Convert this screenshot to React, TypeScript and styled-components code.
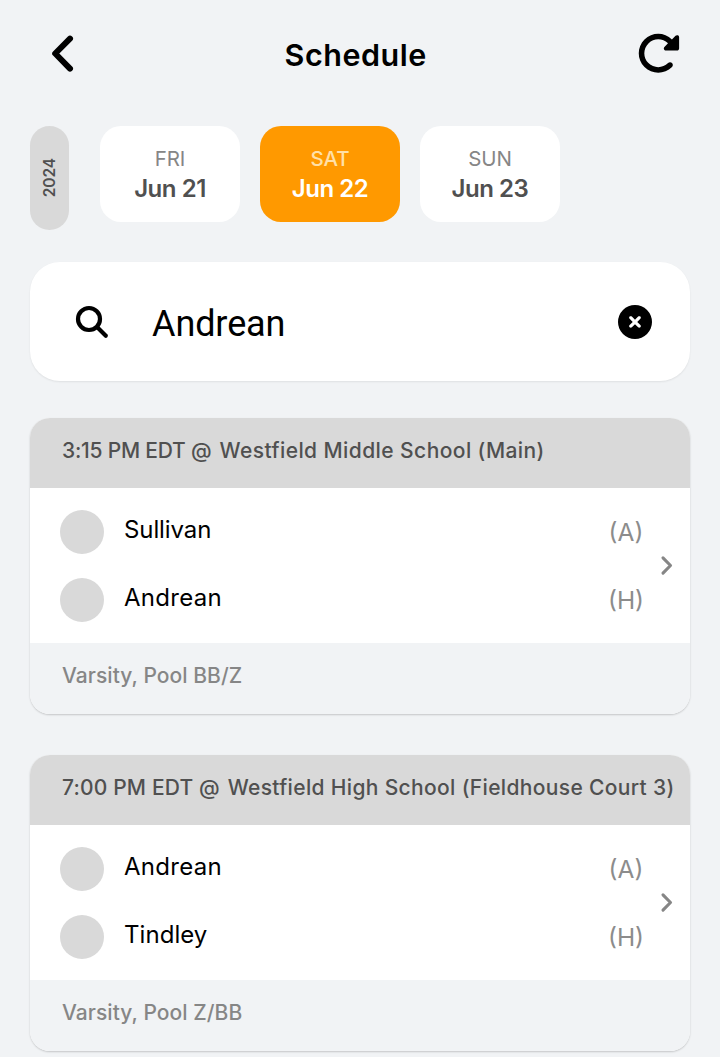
import React from 'react';
import styled, { createGlobalStyle } from 'styled-components';
import { FaCircleXmark, FaRotateRight } from 'react-icons/fa6';

const GlobalStyle = createGlobalStyle`
  * { box-sizing: border-box; }
  body { margin: 0; background: #f1f3f5; font-family: Inter, 'Liberation Sans', sans-serif; }
  button { border: 0; padding: 0; background: none; font: inherit; color: inherit; display: flex; }
`;

const Screen = styled.main`
  width: 720px;
  height: 1057px;
  overflow: hidden;
  padding: 0 30px;
  background: #f1f3f5;
`;

const TopBar = styled.header`
  height: 126px;
  padding: 31px 10px 0 20px;
  display: flex;
  align-items: flex-start;
`;

const Title = styled.h1`
  flex: 1;
  margin: 0;
  text-align: center;
  font-size: 30.5px;
  font-weight: 600;
  line-height: 48px;
  letter-spacing: 0.55px;
  color: #000;
`;

const DateRow = styled.section`
  height: 136px;
  display: flex;
  align-items: flex-start;
`;

const YearPill = styled.div`
  width: 39px;
  height: 104px;
  margin-right: 31px;
  border-radius: 20px;
  background: #d9d9d9;
  display: flex;
  align-items: center;
  justify-content: center;
`;

const Year = styled.span`
  writing-mode: vertical-rl;
  transform: rotate(180deg);
  font-size: 15.5px;
  font-weight: 600;
  line-height: 20px;
  letter-spacing: -0.1px;
  color: #505050;
`;

const DayCard = styled.button<{ $active?: boolean }>`
  && {
    width: 140px;
    height: 96px;
    margin-right: 20px;
    padding-top: 18px;
    border-radius: 21px;
    flex-direction: column;
    align-items: center;
    background: ${p => (p.$active ? '#ff9900' : '#fff')};
    color: ${p => (p.$active ? '#fff' : '#505050')};
  }
`;

const Weekday = styled.span<{ $active?: boolean }>`
  font-size: 20.5px;
  font-weight: ${p => (p.$active ? 500 : 400)};
  line-height: 29px;
  letter-spacing: -0.1px;
  color: ${p => (p.$active ? '#ffe0a8' : '#868686')};
`;

const DayDate = styled.span`
  font-size: 24px;
  font-weight: 600;
  line-height: 31px;
  letter-spacing: -0.45px;
`;

const SearchBox = styled.div`
  height: 119px;
  margin-bottom: 37px;
  padding: 0 38px 0 44px;
  border-radius: 30px;
  background: #fff;
  box-shadow: 0 1px 2px rgba(0, 0, 0, 0.08);
  display: flex;
  align-items: center;
`;

const Query = styled.span`
  flex: 1;
  margin-left: 42px;
  padding-top: 4px;
  font-family: Roboto, sans-serif;
  font-size: 36px;
  line-height: 44px;
  letter-spacing: -0.1px;
  color: #000;
`;

const GameCard = styled.article`
  height: 296px;
  margin-bottom: 41px;
  border-radius: 20px;
  overflow: hidden;
  background: #fff;
  box-shadow: 0 1px 2px rgba(0, 0, 0, 0.19);
`;

const GameHeader = styled.div`
  height: 69.5px;
  padding-left: 32px;
  background: #d9d9d9;
  color: #505050;
  font-size: 21px;
  font-weight: 500;
  line-height: 65px;
  white-space: pre;
`;

const HeaderPart = styled.span<{ $spacing: number }>`
  letter-spacing: ${p => p.$spacing}px;
`;

const GameBody = styled.div`
  height: 155.5px;
  padding: 0 16px 0 30px;
  display: flex;
  align-items: center;
`;

const Teams = styled.div`
  flex: 1;
  display: flex;
  flex-direction: column;
  gap: 24px;
`;

const TeamRow = styled.div`
  height: 44px;
  display: flex;
  align-items: center;
`;

const Avatar = styled.span`
  width: 44px;
  height: 44px;
  margin: 1px 20px 0 0;
  border-radius: 50%;
  background: #d9d9d9;
`;

const TeamName = styled.span<{ $spacing: number }>`
  flex: 1;
  padding-bottom: 3px;
  font-size: 24px;
  line-height: 30px;
  letter-spacing: ${p => p.$spacing}px;
  color: #000;
`;

const Side = styled.span`
  width: 40px;
  margin-right: 14px;
  padding-top: 2px;
  text-align: center;
  font-size: 24.5px;
  font-weight: 400;
  color: #8c8c8c;
`;

const GameFooter = styled.div`
  height: 71px;
  padding-left: 32px;
  background: #f1f3f5;
  color: #868686;
  font-size: 21px;
  font-weight: 500;
  line-height: 65px;
  letter-spacing: 0.05px;
`;

const days = [
  { weekday: 'FRI', date: 'Jun 21' },
  { weekday: 'SAT', date: 'Jun 22', active: true },
  { weekday: 'SUN', date: 'Jun 23' },
];

const sullivan = { name: 'Sullivan', spacing: -0.1 };
const andrean = { name: 'Andrean', spacing: 0.3 };
const tindley = { name: 'Tindley', spacing: 0.05 };

const games = [
  {
    time: { text: '3:15 PM EDT ', spacing: -0.22 },
    venue: { text: 'Westfield Middle School (Main)', spacing: 0.42 },
    away: sullivan,
    home: andrean,
    pool: 'Varsity, Pool BB/Z',
  },
  {
    time: { text: '7:00 PM EDT ', spacing: 0.16 },
    venue: { text: 'Westfield High School (Fieldhouse Court 3)', spacing: 0.34 },
    away: andrean,
    home: tindley,
    pool: 'Varsity, Pool Z/BB',
  },
];

const BackIcon = () => (
  <svg width="26" height="45" viewBox="0 0 26 45" fill="none" stroke="#000" strokeWidth="6" strokeLinecap="round" strokeLinejoin="round">
    <path d="M20 7.6 5.2 22.5 20 37.6" />
  </svg>
);

const SearchIcon = () => (
  <svg width="36" height="36" viewBox="0 0 36 36" fill="none" stroke="#000" strokeWidth="4.2" strokeLinecap="round">
    <circle cx="15" cy="15" r="11" />
    <path d="M23.3 23.3 31.8 31.8" />
  </svg>
);

const OpenIcon = () => (
  <svg width="14" height="22" viewBox="0 0 14 22" fill="none" stroke="#868686" strokeWidth="3.1" strokeLinecap="round" strokeLinejoin="round">
    <path d="M3 3.9 10.5 11.5 3 19.1" />
  </svg>
);

export default function App() {
  return (
    <Screen>
      <GlobalStyle />
      <TopBar>
        <button aria-label="Back"><BackIcon /></button>
        <Title>Schedule</Title>
        <button aria-label="Refresh"><FaRotateRight size={44.5} /></button>
      </TopBar>
      <DateRow>
        <YearPill><Year>2024</Year></YearPill>
        {days.map(d => (
          <DayCard key={d.date} $active={d.active}>
            <Weekday $active={d.active}>{d.weekday}</Weekday>
            <DayDate>{d.date}</DayDate>
          </DayCard>
        ))}
      </DateRow>
      <SearchBox>
        <SearchIcon />
        <Query>Andrean</Query>
        <button aria-label="Clear"><FaCircleXmark size={34} /></button>
      </SearchBox>
      {games.map(g => (
        <GameCard key={g.pool}>
          <GameHeader>
            <HeaderPart $spacing={g.time.spacing}>{g.time.text}</HeaderPart>
            <HeaderPart $spacing={1.2}>{'@ '}</HeaderPart>
            <HeaderPart $spacing={g.venue.spacing}>{g.venue.text}</HeaderPart>
          </GameHeader>
          <GameBody>
            <Teams>
              <TeamRow><Avatar /><TeamName $spacing={g.away.spacing}>{g.away.name}</TeamName><Side>(A)</Side></TeamRow>
              <TeamRow><Avatar /><TeamName $spacing={g.home.spacing}>{g.home.name}</TeamName><Side>(H)</Side></TeamRow>
            </Teams>
            <OpenIcon />
          </GameBody>
          <GameFooter>{g.pool}</GameFooter>
        </GameCard>
      ))}
    </Screen>
  );
}
